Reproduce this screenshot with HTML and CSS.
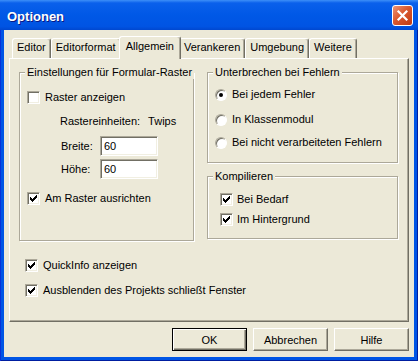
FILE: index.html
```html
<!DOCTYPE html>
<html lang="de">
<head>
  <meta charset="UTF-8">
  <title>Optionen</title>
  <link rel="stylesheet" href="styles.css">
</head>
<body>
  <div class="window">
    <div class="titlebar">
      <span class="title">Optionen</span>
      <span class="close">
        <svg width="13" height="13" viewBox="0 0 13 13"><path d="M2.5 2.5 L10.5 10.5 M10.5 2.5 L2.5 10.5" stroke="#fff" stroke-width="2.2" stroke-linecap="square"/></svg>
      </span>
    </div>

    <div class="client">
      <!-- Registerkarten -->
      <div class="tabs">
        <div class="tab">Editor</div>
        <div class="tab">Editorformat</div>
        <div class="tab active">Allgemein</div>
        <div class="tab">Verankeren</div>
        <div class="tab">Umgebung</div>
        <div class="tab">Weitere</div>
      </div>

      <div class="panel">
        <div class="columns">
          <fieldset class="group group-raster">
            <legend>Einstellungen für Formular-Raster</legend>
            <label class="check first">
              <span class="box"></span>Raster anzeigen
            </label>
            <div class="units"><span>Rastereinheiten:</span><span>Twips</span></div>
            <div class="field first-field">
              <span class="field-label">Breite:</span>
              <input class="edit" type="text" value="60">
            </div>
            <div class="field">
              <span class="field-label">Höhe:</span>
              <input class="edit" type="text" value="60">
            </div>
            <label class="check align">
              <span class="box on"><svg width="7" height="7" viewBox="0 0 7 7"><path d="M0 2h1v1h1v1h1v-1h1v-1h1v-1h1v-1h1v3h-1v1h-1v1h-1v1h-1v1h-1v-1h-1v-1h-1z" fill="#000"/></svg></span>Am Raster ausrichten
            </label>
          </fieldset>

          <div class="col-right">
            <fieldset class="group group-break">
              <legend>Unterbrechen bei Fehlern</legend>
              <label class="radio r1"><span class="ring on"></span>Bei jedem Fehler</label>
              <label class="radio r2"><span class="ring"></span>In Klassenmodul</label>
              <label class="radio r3"><span class="ring"></span>Bei nicht verarbeiteten Fehlern</label>
            </fieldset>

            <fieldset class="group group-compile">
              <legend>Kompilieren</legend>
              <label class="check c1">
                <span class="box on"><svg width="7" height="7" viewBox="0 0 7 7"><path d="M0 2h1v1h1v1h1v-1h1v-1h1v-1h1v-1h1v3h-1v1h-1v1h-1v1h-1v1h-1v-1h-1v-1h-1z" fill="#000"/></svg></span>Bei Bedarf
              </label>
              <label class="check c2">
                <span class="box on"><svg width="7" height="7" viewBox="0 0 7 7"><path d="M0 2h1v1h1v1h1v-1h1v-1h1v-1h1v-1h1v3h-1v1h-1v1h-1v1h-1v1h-1v-1h-1v-1h-1z" fill="#000"/></svg></span>Im Hintergrund
              </label>
            </fieldset>
          </div>
        </div>

        <label class="check quick">
          <span class="box on"><svg width="7" height="7" viewBox="0 0 7 7"><path d="M0 2h1v1h1v1h1v-1h1v-1h1v-1h1v-1h1v3h-1v1h-1v1h-1v1h-1v1h-1v-1h-1v-1h-1z" fill="#000"/></svg></span>QuickInfo anzeigen
        </label>
        <label class="check hide">
          <span class="box on"><svg width="7" height="7" viewBox="0 0 7 7"><path d="M0 2h1v1h1v1h1v-1h1v-1h1v-1h1v-1h1v3h-1v1h-1v1h-1v1h-1v1h-1v-1h-1v-1h-1z" fill="#000"/></svg></span>Ausblenden des Projekts schließt Fenster
        </label>
      </div>

      <div class="buttons">
        <button class="btn default">OK</button>
        <button class="btn">Abbrechen</button>
        <button class="btn">Hilfe</button>
      </div>
    </div>
  </div>
</body>
</html>
```

FILE: styles.css
```css
body {
  margin: 0;
  font-family: "Liberation Sans", Arial, sans-serif;
  font-size: 11px;
  color: #000;
  background: #fff;
}
.window {
  width: 418px;
  height: 361px;
  display: flex;
  flex-direction: column;
  background: #0055e5;
  box-shadow: inset 1px 0 0 #0831d9, inset -1px 0 0 #001ea0, inset 0 -1px 0 #001ea0;
}
.titlebar {
  height: 30px;
  flex: none;
  display: flex;
  align-items: center;
  justify-content: space-between;
  padding: 0 5px 0 7px;
  background: linear-gradient(to bottom, #3d8ff8 0, #0a60eb 3px, #0058e6 50%, #0054e3 88%, #0047cf 100%);
}
.title {
  color: #fff;
  font-weight: bold;
  font-size: 13px;
  text-shadow: 1px 1px 0 #0a1883;
  padding-top: 2px;
}
.close {
  width: 21px;
  height: 21px;
  box-sizing: border-box;
  border: 1px solid #fff;
  border-radius: 3px;
  background: linear-gradient(135deg, #eb9577 0, #d9582f 45%, #c23b12 100%);
  display: flex;
  align-items: center;
  justify-content: center;
  margin-top: 1px;
}
.client {
  flex: 1;
  margin: 0 4px 4px;
  background: #ece9d8;
  padding: 6px 5px;
  display: flex;
  flex-direction: column;
}

/* Registerkarten */
.tabs {
  display: flex;
  align-items: flex-end;
  height: 22px;
  padding-left: 3px;
  position: relative;
  z-index: 1;
}
.tab {
  height: 20px;
  box-sizing: border-box;
  line-height: 17px;
  padding: 0 4px;
  border: 1px solid;
  border-color: #fff #716f64 transparent #fff;
  border-bottom: none;
  border-radius: 3px 3px 0 0;
  box-shadow: inset -1px 0 0 #aca899;
}
.tab.active {
  height: 23px;
  line-height: 19px;
  margin: 0 -2px -1px;
  padding: 0 6px;
  background: #ece9d8;
  position: relative;
}
.panel {
  flex: none;
  height: 264px;
  box-sizing: border-box;
  border: 1px solid;
  border-color: #fff #716f64 #716f64 #fff;
  box-shadow: inset -1px -1px 0 #aca899;
  padding: 7px 10px 0 9px;
}
.columns {
  display: flex;
  gap: 13px;
  align-items: flex-start;
}
.col-right {
  flex: 1;
  display: flex;
  flex-direction: column;
  gap: 7px;
}
.group {
  margin: 0;
  padding: 0;
  min-width: 0;
  box-sizing: border-box;
  border: 1px solid #aca899;
  box-shadow: inset 1px 1px 0 #fff, 1px 1px 0 #fff;
}
.group legend {
  margin-left: 5px;
  padding: 0 2px;
  line-height: 13px;
  white-space: nowrap;
  background: #ece9d8;
}
.group-raster {
  width: 175px;
  height: 175px;
}
.group-break {
  height: 97px;
}
.group-compile {
  height: 69px;
}

/* Kontrollkästchen und Optionsfelder */
.check, .radio {
  display: flex;
  align-items: center;
  gap: 5px;
  height: 13px;
  line-height: 13px;
  white-space: nowrap;
}
.box {
  width: 13px;
  height: 13px;
  flex: none;
  box-sizing: border-box;
  border: 1px solid;
  border-color: #aca899 #fff #fff #aca899;
  box-shadow: inset 1px 1px 0 #716f64, inset -1px -1px 0 #f1efe2;
  background: #fff;
  display: flex;
  align-items: center;
  justify-content: center;
}
.box svg {
  display: block;
}
.ring {
  width: 12px;
  height: 12px;
  flex: none;
  box-sizing: border-box;
  border-radius: 50%;
  border: 1px solid;
  border-color: #aca899 #fff #fff #aca899;
  box-shadow: inset 1px 1px 0 #716f64;
  background: #fff;
  display: flex;
  align-items: center;
  justify-content: center;
}
.ring.on::after {
  content: "";
  width: 4px;
  height: 4px;
  border-radius: 50%;
  background: #000;
}
.radio {
  margin-left: 7px;
}
.r1 { margin-top: 9px; }
.r2 { margin-top: 12px; }
.r3 { margin-top: 10px; }
.c1, .c2 {
  margin-left: 12px;
  gap: 4px;
}
.c1 { margin-top: 10px; }
.c2 { margin-top: 7px; }

.check.first {
  margin: 12px 0 0 7px;
}
.units {
  display: flex;
  gap: 8px;
  margin: 11px 0 0 40px;
  line-height: 13px;
}
.field {
  display: flex;
  align-items: center;
  height: 20px;
  margin: 3px 0 0 41px;
}
.field.first-field {
  margin-top: 8px;
}
.field-label {
  width: 39px;
}
.edit {
  width: 58px;
  height: 20px;
  box-sizing: border-box;
  margin: 0;
  padding: 0 0 0 3px;
  font: inherit;
  color: #000;
  background: #fff;
  border: 1px solid;
  border-color: #aca899 #fff #fff #aca899;
  box-shadow: inset 1px 1px 0 #716f64, inset -1px -1px 0 #f1efe2;
  outline: none;
}
.check.align {
  margin: 13px 0 0 7px;
}
.check.quick {
  margin: 18px 0 0 6px;
}
.check.hide {
  margin: 12px 0 0 6px;
}

/* Schaltflächen */
.buttons {
  display: flex;
  justify-content: flex-end;
  gap: 6px;
  margin-top: 6px;
}
.btn {
  width: 75px;
  height: 23px;
  box-sizing: border-box;
  margin: 0;
  padding: 0;
  font: inherit;
  color: #000;
  background: #ece9d8;
  border: 1px solid;
  border-color: #fff #716f64 #716f64 #fff;
  box-shadow: inset -1px -1px 0 #aca899;
}
.btn.default {
  border: 1px solid #000;
  box-shadow: inset 1px 1px 0 #fff, inset -1px -1px 0 #716f64, inset -2px -2px 0 #aca899;
}
```
